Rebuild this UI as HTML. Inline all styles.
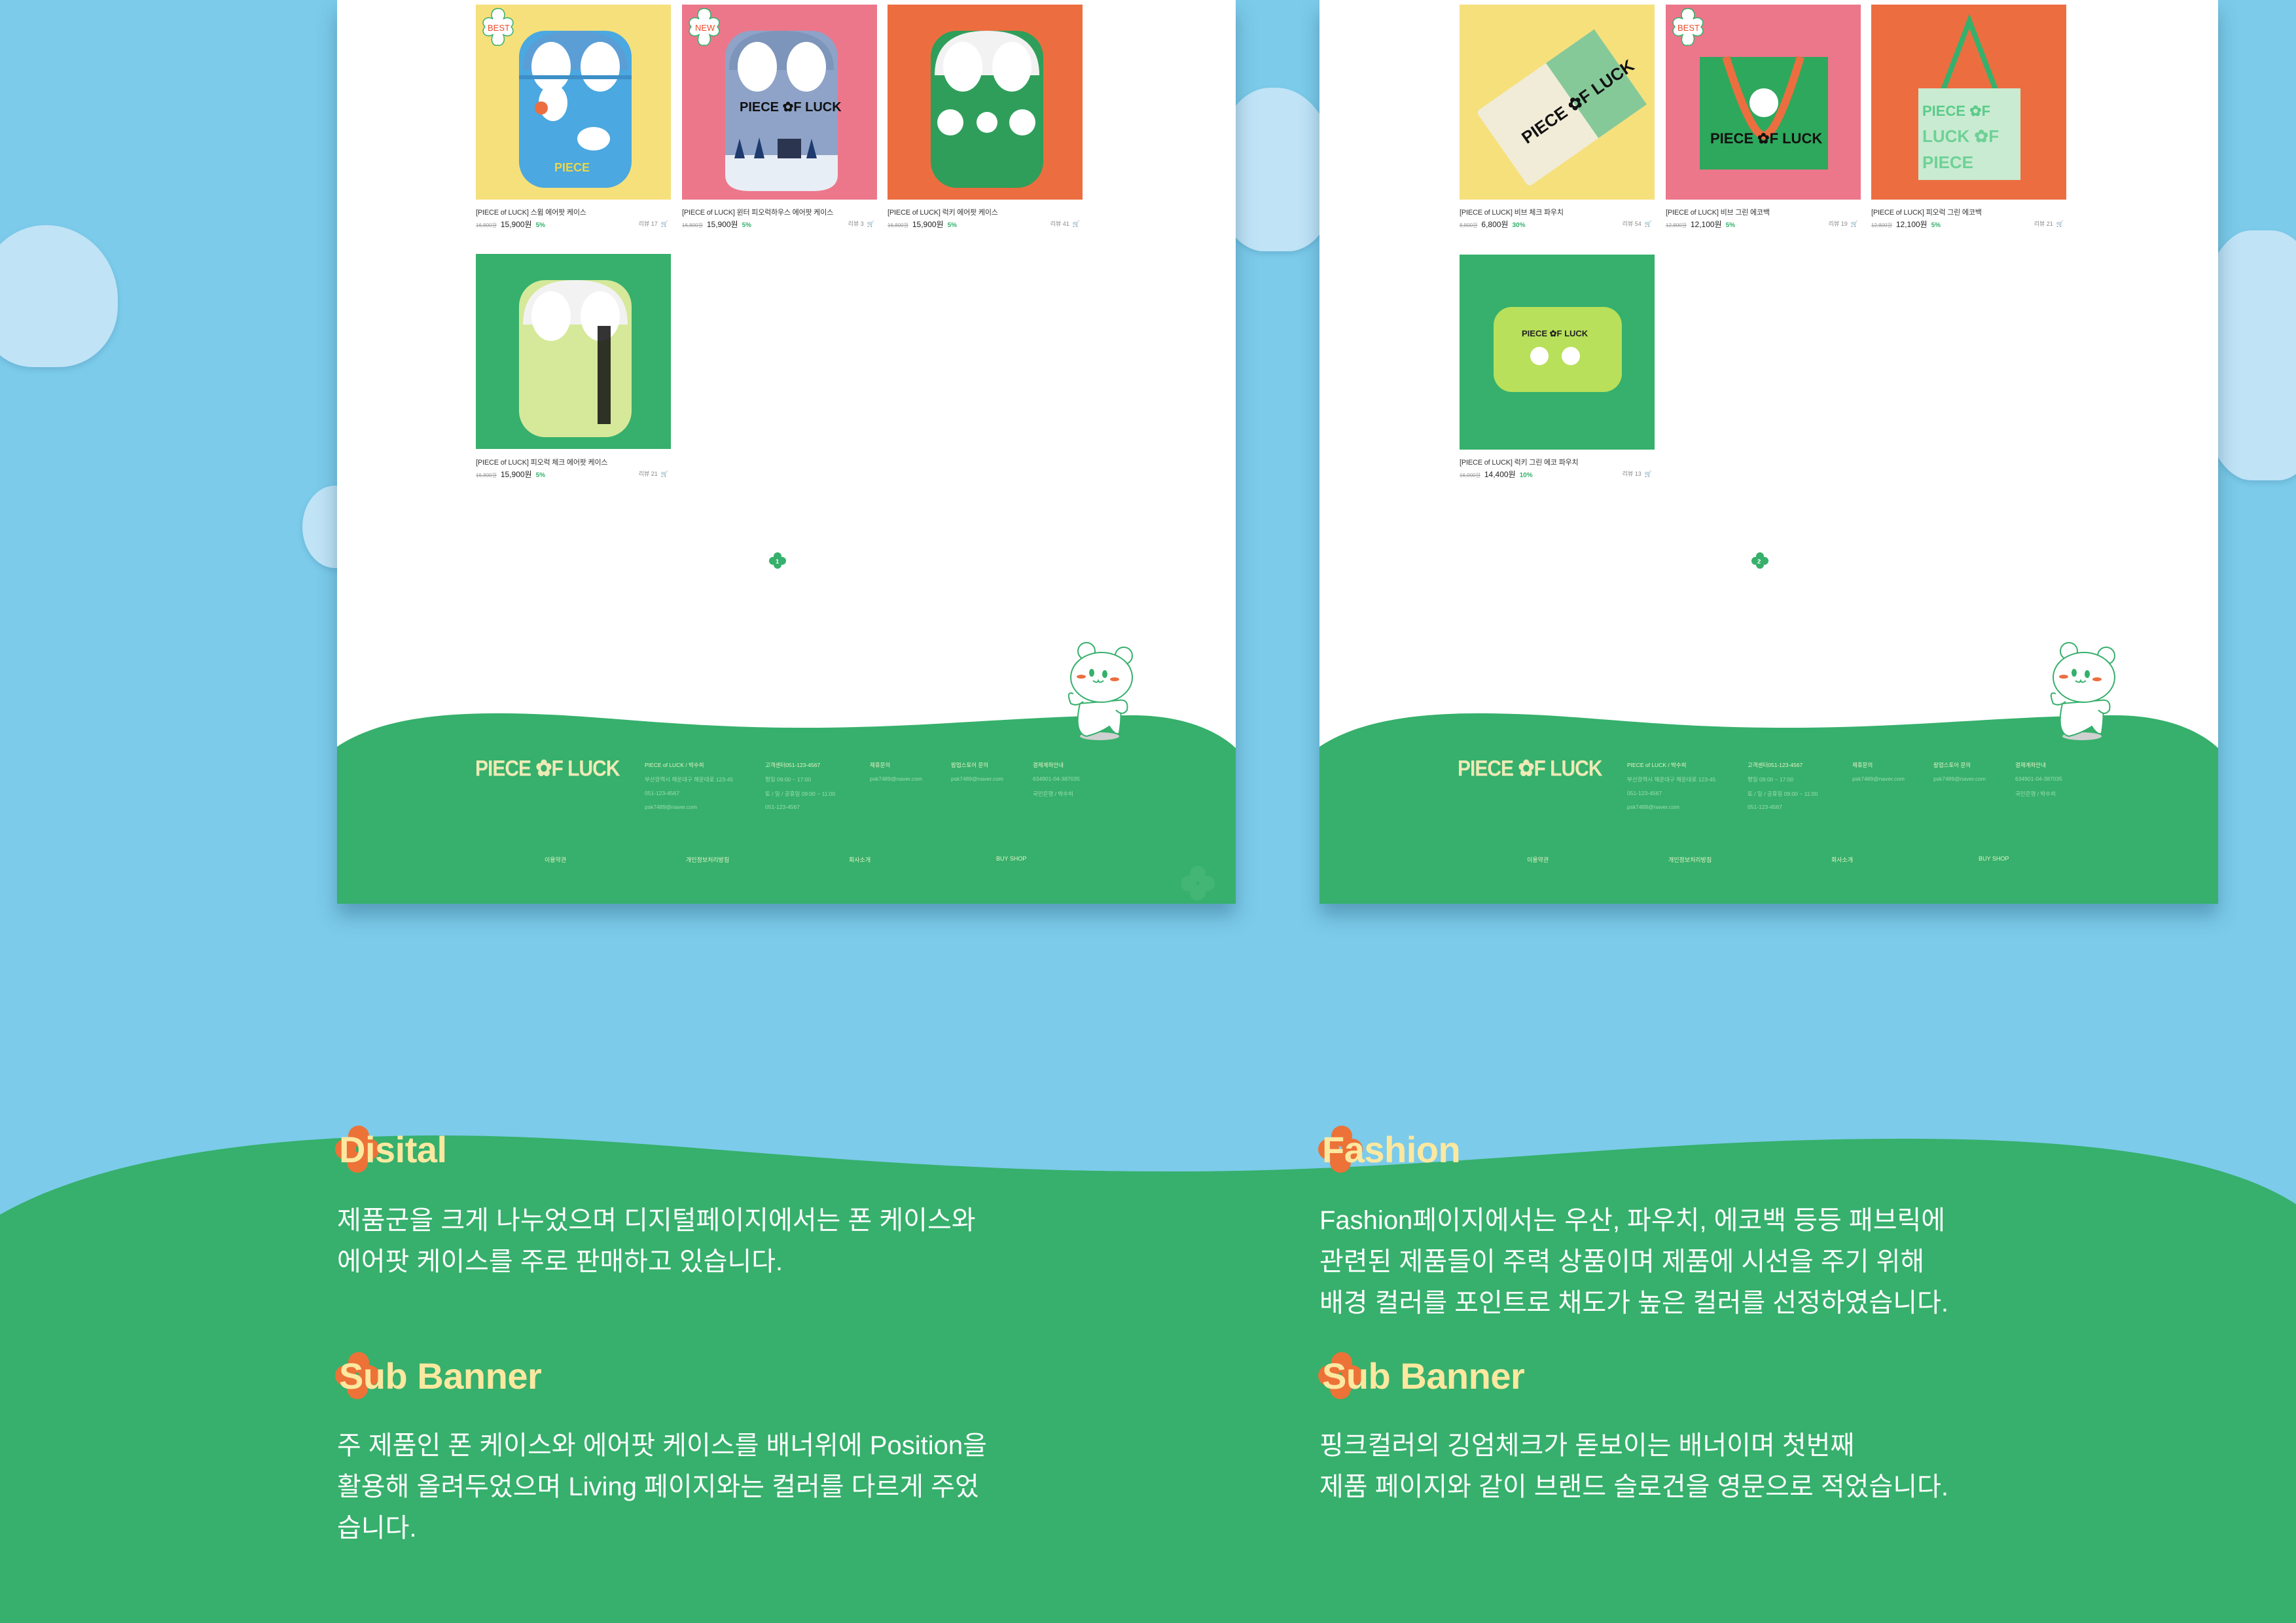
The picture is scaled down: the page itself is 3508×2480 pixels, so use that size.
<!DOCTYPE html>
<html><head><meta charset="utf-8">
<style>
*{margin:0;padding:0;box-sizing:border-box}
body{width:3508px;height:2480px;background:#7ccbea;position:relative;overflow:hidden;font-family:"Liberation Sans","Noto Sans CJK KR",sans-serif}
.abs{position:absolute}
.cloud{position:absolute;background:#c0e3f6;box-shadow:0 4px 8px rgba(60,120,160,.25)}
.page{position:absolute;top:0;width:1373px;height:1381px;background:#fff;box-shadow:0 18px 28px rgba(20,70,100,.35);overflow:hidden}
.tile{position:absolute;width:298px;height:298px;overflow:hidden}
.pt{position:absolute;font-size:11px;color:#333;white-space:nowrap;letter-spacing:-.2px}
.pp{position:absolute;white-space:nowrap;font-size:12px;color:#222;width:298px}
.pp s{font-size:8px;color:#999;margin-right:6px}
.pp b{font-size:10px;color:#36b06c;margin-left:6px}
.pp i{position:absolute;right:4px;top:1px;font-style:normal;font-size:9px;color:#888}
.foot{position:absolute;font-size:8.5px;color:#9fdcb2;white-space:nowrap}
.fh{color:#e7f2c8}
.logo{position:absolute;font-family:"Liberation Sans",sans-serif;font-weight:900;color:#eeeab6;font-size:30px;letter-spacing:-1px;white-space:nowrap;transform:scaleY(1.15)}
.flink{position:absolute;font-size:9px;color:#e7f2c8;white-space:nowrap}
.ttl{position:absolute;font-size:56px;font-weight:bold;color:#fde8a0;white-space:nowrap;letter-spacing:-.5px}
.body{position:absolute;font-size:40px;color:#fff;line-height:63px;white-space:nowrap;letter-spacing:0}
.badge{position:absolute;left:2px;top:2px;width:64px;height:64px}
</style></head><body>

<div class="cloud" style="left:-30px;top:344px;width:210px;height:217px;border-radius:50% 55% 45% 40%"></div>
<div class="cloud" style="left:462px;top:742px;width:100px;height:126px;border-radius:50%"></div>
<div class="cloud" style="left:1860px;top:134px;width:180px;height:250px;border-radius:45% 50% 40% 40%"></div>
<div class="cloud" style="left:3360px;top:352px;width:200px;height:382px;border-radius:40% 45% 40% 40%"></div>

<svg class="abs" style="left:0;top:0" width="3508" height="2480">
<path d="M0,1856 C150,1770 400,1735 671,1735 C1000,1735 1300,1790 1790,1790 C2200,1790 2500,1740 2908,1740 C3200,1740 3400,1770 3508,1840 L3508,2480 L0,2480 Z" fill="#36b06c"/>
</svg>

<!-- LEFT PAGE -->
<div class="page" style="left:515px">
  <div class="tile" style="left:212px;top:7px;background:#f6e07c">
    <svg width="298" height="298"><rect x="66" y="40" width="172" height="240" rx="40" fill="#4ba8e0"/><path d="M72,100 Q72,40 152,40 Q232,40 232,100 Z" fill="#5b9ed6"/><ellipse cx="115" cy="95" rx="30" ry="38" fill="#fff"/><ellipse cx="190" cy="95" rx="30" ry="38" fill="#fff"/><rect x="66" y="108" width="172" height="6" fill="#3d8fc8"/><ellipse cx="118" cy="150" rx="22" ry="28" fill="#fff"/><ellipse cx="180" cy="205" rx="25" ry="18" fill="#fff"/><circle cx="100" cy="158" r="10" fill="#ec6e40"/><text x="120" y="255" font-size="18" font-weight="900" fill="#e6d750" font-family="Liberation Sans">PIECE</text></svg>
    <svg class="badge" viewBox="0 0 64 64"><path d="M32,4 C42,4 44,14 40,20 C50,14 60,24 52,32 C60,40 50,50 40,44 C44,54 38,62 32,60 C24,62 20,54 24,44 C14,50 4,40 12,32 C4,24 14,14 24,20 C20,14 22,4 32,4Z" fill="#fff" stroke="#36b06c" stroke-width="1.5"/><text x="16" y="38" font-size="13" fill="#ea4a2a" font-family="Liberation Sans">BEST</text></svg>
  </div>
  <div class="tile" style="left:527px;top:7px;background:#ec778b">
    <svg width="298" height="298"><rect x="66" y="40" width="172" height="245" rx="40" fill="#8ea3c7"/><path d="M72,100 Q72,40 152,40 Q232,40 232,100 Z" fill="#7d95ba"/><ellipse cx="115" cy="95" rx="30" ry="38" fill="#fff"/><ellipse cx="190" cy="95" rx="30" ry="38" fill="#fff"/><text x="88" y="163" font-size="20" font-weight="900" fill="#111" font-family="Liberation Sans">PIECE ✿F LUCK</text><path d="M66,230 L238,230 L238,260 Q238,285 200,285 L104,285 Q66,285 66,260Z" fill="#e8eef6"/><path d="M80,235 l8,-30 l8,30 M110,235 l8,-32 l8,32 M190,235 l8,-30 l8,30" fill="#1e3a6e"/><rect x="146" y="205" width="36" height="30" fill="#2c3550"/></svg>
    <svg class="badge" viewBox="0 0 64 64"><path d="M32,4 C42,4 44,14 40,20 C50,14 60,24 52,32 C60,40 50,50 40,44 C44,54 38,62 32,60 C24,62 20,54 24,44 C14,50 4,40 12,32 C4,24 14,14 24,20 C20,14 22,4 32,4Z" fill="#fff" stroke="#36b06c" stroke-width="1.5"/><text x="18" y="38" font-size="13" fill="#ea4a2a" font-family="Liberation Sans">NEW</text></svg>
  </div>
  <div class="tile" style="left:841px;top:7px;background:#ec6e40">
    <svg width="298" height="298"><rect x="66" y="40" width="172" height="240" rx="40" fill="#2f9e5a"/><path d="M72,108 Q72,40 152,40 Q232,40 232,108 Z" fill="#f2f2f2"/><ellipse cx="115" cy="95" rx="30" ry="38" fill="#fff"/><ellipse cx="190" cy="95" rx="30" ry="38" fill="#fff"/><circle cx="96" cy="180" r="20" fill="#fff"/><circle cx="152" cy="180" r="16" fill="#fff"/><circle cx="206" cy="180" r="20" fill="#fff"/></svg>
  </div>
  <div class="tile" style="left:212px;top:388px;background:#36b06c">
    <svg width="298" height="298"><rect x="66" y="40" width="172" height="240" rx="40" fill="#d6e89a"/><path d="M72,108 Q72,40 152,40 Q232,40 232,108 Z" fill="#f2f2f2"/><ellipse cx="115" cy="95" rx="30" ry="38" fill="#fff"/><ellipse cx="190" cy="95" rx="30" ry="38" fill="#fff"/><rect x="186" y="110" width="20" height="150" fill="#111" opacity=".85"/></svg>
  </div>

  <div class="pt" style="left:212px;top:316px">[PIECE of LUCK] 스윔 에어팟 케이스</div>
  <div class="pp" style="left:212px;top:334px"><s>16,800원</s>15,900원<b>5%</b><i>리뷰 17 &nbsp;🛒</i></div>
  <div class="pt" style="left:527px;top:316px">[PIECE of LUCK] 윈터 피오럭하우스 에어팟 케이스</div>
  <div class="pp" style="left:527px;top:334px"><s>16,800원</s>15,900원<b>5%</b><i>리뷰 3 &nbsp;🛒</i></div>
  <div class="pt" style="left:841px;top:316px">[PIECE of LUCK] 럭키 에어팟 케이스</div>
  <div class="pp" style="left:841px;top:334px"><s>16,800원</s>15,900원<b>5%</b><i>리뷰 41 &nbsp;🛒</i></div>
  <div class="pt" style="left:212px;top:698px">[PIECE of LUCK] 피오럭 체크 에어팟 케이스</div>
  <div class="pp" style="left:212px;top:716px"><s>16,800원</s>15,900원<b>5%</b><i>리뷰 21 &nbsp;🛒</i></div>

  <svg class="abs" style="left:658px;top:842px" width="30" height="30" viewBox="0 0 30 30"><circle cx="15" cy="8" r="6" fill="#36b06c"/><circle cx="8" cy="15" r="6" fill="#36b06c"/><circle cx="22" cy="15" r="6" fill="#36b06c"/><circle cx="15" cy="21" r="6" fill="#36b06c"/><text x="12" y="19" font-size="9" fill="#fff" font-weight="bold">1</text></svg>

  <svg class="abs" style="left:0;top:1081px" width="1373" height="300"><path d="M0,60 C60,20 150,8 253,9 C400,10 500,30 700,31 C900,32 1050,12 1215,12 C1300,12 1350,40 1373,62 L1373,300 L0,300 Z" fill="#36b06c"/></svg>
  <svg class="abs" style="left:1085px;top:960px" width="160" height="180" viewBox="0 0 160 180"><ellipse cx="80" cy="165" rx="30" ry="6" fill="#d0d0d0"/><g fill="#fff" stroke="#36b06c" stroke-width="2"><path d="M50,115 Q40,160 60,165 Q80,160 95,150 Q105,165 110,160 Q115,130 110,110 Z"/><path d="M40,100 Q28,95 36,115 Q45,120 55,112"/><path d="M110,110 Q125,108 122,125 Q115,135 105,125"/><circle cx="60" cy="35" r="13"/><circle cx="117" cy="42" r="13"/><ellipse cx="83" cy="75" rx="47" ry="38"/></g><ellipse cx="68" cy="68" rx="4" ry="6" fill="#36b06c"/><ellipse cx="88" cy="70" rx="4" ry="6" fill="#36b06c"/><path d="M70,80 Q76,85 78,80 Q80,85 86,80" stroke="#36b06c" stroke-width="2" fill="none"/><ellipse cx="52" cy="74" rx="7" ry="3" fill="#ec6e40"/><ellipse cx="103" cy="78" rx="7" ry="3" fill="#ec6e40"/></svg>

  <div class="logo" style="left:211px;top:1157px">PIECE ✿F LUCK</div>
  <div class="foot fh" style="left:470px;top:1163px">PIECE of LUCK / 박수희</div>
  <div class="foot" style="left:470px;top:1185px">부산광역시 해운대구 해운대로 123-45</div>
  <div class="foot" style="left:470px;top:1207px">051-123-4567</div>
  <div class="foot" style="left:470px;top:1228px">psk7489@naver.com</div>
  <div class="foot fh" style="left:654px;top:1163px">고객센터051-123-4567</div>
  <div class="foot" style="left:654px;top:1185px">평일 09:00 ~ 17:00</div>
  <div class="foot" style="left:654px;top:1207px">토 / 일 / 공휴일 09:00 ~ 11:00</div>
  <div class="foot" style="left:654px;top:1228px">051-123-4567</div>
  <div class="foot fh" style="left:814px;top:1163px">제휴문의</div>
  <div class="foot" style="left:814px;top:1185px">psk7489@naver.com</div>
  <div class="foot fh" style="left:938px;top:1163px">팝업스토어 문의</div>
  <div class="foot" style="left:938px;top:1185px">psk7489@naver.com</div>
  <div class="foot fh" style="left:1063px;top:1163px">결제계좌안내</div>
  <div class="foot" style="left:1063px;top:1185px">634901-04-387035</div>
  <div class="foot" style="left:1063px;top:1207px">국민은행 / 박수희</div>
  <div class="flink" style="left:317px;top:1307px">이용약관</div>
  <div class="flink" style="left:533px;top:1307px">개인정보처리방침</div>
  <div class="flink" style="left:782px;top:1307px">회사소개</div>
  <div class="flink" style="left:1007px;top:1307px">BUY SHOP</div>
  <svg class="abs" style="left:1285px;top:1320px" width="60" height="60"><g fill="#4cbb7c" opacity=".6"><circle cx="30" cy="15" r="12"/><circle cx="16" cy="30" r="12"/><circle cx="44" cy="30" r="12"/><circle cx="30" cy="44" r="12"/></g></svg>
</div>

<!-- RIGHT PAGE -->
<div class="page" style="left:2016px">
  <div class="tile" style="left:214px;top:7px;background:#f6e07c">
    <svg width="298" height="298"><g transform="rotate(-35 150 150)"><rect x="40" y="90" width="220" height="140" rx="6" fill="#f1ecd8"/><rect x="170" y="90" width="90" height="140" fill="#6cc08a" opacity=".8"/><text x="75" y="175" font-size="26" font-weight="900" fill="#111" font-family="Liberation Sans">PIECE ✿F LUCK</text></g></svg>
  </div>
  <div class="tile" style="left:529px;top:7px;background:#ec778b">
    <svg width="298" height="298"><rect x="52" y="80" width="196" height="172" fill="#2ea85c"/><path d="M92,80 Q130,200 150,200 Q170,200 206,80" stroke="#ec6e40" stroke-width="12" fill="none"/><circle cx="150" cy="150" r="22" fill="#fff"/><text x="68" y="212" font-size="22" font-weight="900" fill="#111" font-family="Liberation Sans">PIECE ✿F LUCK</text></svg>
    <svg class="badge" viewBox="0 0 64 64"><path d="M32,4 C42,4 44,14 40,20 C50,14 60,24 52,32 C60,40 50,50 40,44 C44,54 38,62 32,60 C24,62 20,54 24,44 C14,50 4,40 12,32 C4,24 14,14 24,20 C20,14 22,4 32,4Z" fill="#fff" stroke="#36b06c" stroke-width="1.5"/><text x="16" y="38" font-size="13" fill="#ea4a2a" font-family="Liberation Sans">BEST</text></svg>
  </div>
  <div class="tile" style="left:843px;top:7px;background:#ec6e40">
    <svg width="298" height="298"><path d="M110,130 L150,25 L190,130" stroke="#36b06c" stroke-width="8" fill="none"/><rect x="72" y="128" width="156" height="140" fill="#c9ebd2"/><text x="78" y="170" font-size="22" font-weight="900" fill="#5ccb8a" font-family="Liberation Sans">PIECE ✿F</text><text x="78" y="210" font-size="26" font-weight="900" fill="#6fd196" font-family="Liberation Sans">LUCK ✿F</text><text x="78" y="250" font-size="26" font-weight="900" fill="#6fd196" font-family="Liberation Sans">PIECE</text></svg>
  </div>
  <div class="tile" style="left:214px;top:389px;background:#36b06c">
    <svg width="298" height="298"><rect x="52" y="80" width="196" height="130" rx="28" fill="#b8e05a"/><text x="95" y="125" font-size="13" font-weight="900" fill="#222" font-family="Liberation Sans">PIECE ✿F LUCK</text><circle cx="122" cy="155" r="14" fill="#fff"/><circle cx="170" cy="155" r="14" fill="#fff"/></svg>
  </div>

  <div class="pt" style="left:214px;top:316px">[PIECE of LUCK] 비브 체크 파우치</div>
  <div class="pp" style="left:214px;top:334px"><s>8,800원</s>6,800원<b>30%</b><i>리뷰 54 &nbsp;🛒</i></div>
  <div class="pt" style="left:529px;top:316px">[PIECE of LUCK] 비브 그린 에코백</div>
  <div class="pp" style="left:529px;top:334px"><s>12,800원</s>12,100원<b>5%</b><i>리뷰 19 &nbsp;🛒</i></div>
  <div class="pt" style="left:843px;top:316px">[PIECE of LUCK] 피오럭 그린 에코백</div>
  <div class="pp" style="left:843px;top:334px"><s>12,800원</s>12,100원<b>5%</b><i>리뷰 21 &nbsp;🛒</i></div>
  <div class="pt" style="left:214px;top:698px">[PIECE of LUCK] 럭키 그린 에코 파우치</div>
  <div class="pp" style="left:214px;top:716px"><s>16,000원</s>14,400원<b>10%</b><i>리뷰 13 &nbsp;🛒</i></div>

  <svg class="abs" style="left:658px;top:842px" width="30" height="30" viewBox="0 0 30 30"><circle cx="15" cy="8" r="6" fill="#36b06c"/><circle cx="8" cy="15" r="6" fill="#36b06c"/><circle cx="22" cy="15" r="6" fill="#36b06c"/><circle cx="15" cy="21" r="6" fill="#36b06c"/><text x="11" y="19" font-size="9" fill="#fff" font-weight="bold">2</text></svg>

  <svg class="abs" style="left:0;top:1081px" width="1373" height="300"><path d="M0,60 C60,20 150,8 253,9 C400,10 500,30 700,31 C900,32 1050,12 1215,12 C1300,12 1350,40 1373,62 L1373,300 L0,300 Z" fill="#36b06c"/></svg>
  <svg class="abs" style="left:1085px;top:960px" width="160" height="180" viewBox="0 0 160 180"><ellipse cx="80" cy="165" rx="30" ry="6" fill="#d0d0d0"/><g fill="#fff" stroke="#36b06c" stroke-width="2"><path d="M50,115 Q40,160 60,165 Q80,160 95,150 Q105,165 110,160 Q115,130 110,110 Z"/><path d="M40,100 Q28,95 36,115 Q45,120 55,112"/><path d="M110,110 Q125,108 122,125 Q115,135 105,125"/><circle cx="60" cy="35" r="13"/><circle cx="117" cy="42" r="13"/><ellipse cx="83" cy="75" rx="47" ry="38"/></g><ellipse cx="68" cy="68" rx="4" ry="6" fill="#36b06c"/><ellipse cx="88" cy="70" rx="4" ry="6" fill="#36b06c"/><path d="M70,80 Q76,85 78,80 Q80,85 86,80" stroke="#36b06c" stroke-width="2" fill="none"/><ellipse cx="52" cy="74" rx="7" ry="3" fill="#ec6e40"/><ellipse cx="103" cy="78" rx="7" ry="3" fill="#ec6e40"/></svg>

  <div class="logo" style="left:211px;top:1157px">PIECE ✿F LUCK</div>
  <div class="foot fh" style="left:470px;top:1163px">PIECE of LUCK / 박수희</div>
  <div class="foot" style="left:470px;top:1185px">부산광역시 해운대구 해운대로 123-45</div>
  <div class="foot" style="left:470px;top:1207px">051-123-4567</div>
  <div class="foot" style="left:470px;top:1228px">psk7489@naver.com</div>
  <div class="foot fh" style="left:654px;top:1163px">고객센터051-123-4567</div>
  <div class="foot" style="left:654px;top:1185px">평일 09:00 ~ 17:00</div>
  <div class="foot" style="left:654px;top:1207px">토 / 일 / 공휴일 09:00 ~ 11:00</div>
  <div class="foot" style="left:654px;top:1228px">051-123-4567</div>
  <div class="foot fh" style="left:814px;top:1163px">제휴문의</div>
  <div class="foot" style="left:814px;top:1185px">psk7489@naver.com</div>
  <div class="foot fh" style="left:938px;top:1163px">팝업스토어 문의</div>
  <div class="foot" style="left:938px;top:1185px">psk7489@naver.com</div>
  <div class="foot fh" style="left:1063px;top:1163px">결제계좌안내</div>
  <div class="foot" style="left:1063px;top:1185px">634901-04-387035</div>
  <div class="foot" style="left:1063px;top:1207px">국민은행 / 박수희</div>
  <div class="flink" style="left:317px;top:1307px">이용약관</div>
  <div class="flink" style="left:533px;top:1307px">개인정보처리방침</div>
  <div class="flink" style="left:782px;top:1307px">회사소개</div>
  <div class="flink" style="left:1007px;top:1307px">BUY SHOP</div>
</div>

<svg class="abs" style="left:508px;top:1718px" width="80" height="80" viewBox="0 0 80 80"><g fill="#ec7238"><circle cx="40" cy="18" r="16"/><circle cx="20" cy="38" r="16"/><circle cx="56" cy="38" r="16"/><circle cx="38" cy="58" r="16"/></g></svg>
<div class="ttl" style="left:518px;top:1724px">Disital</div>
<div class="body" style="left:515px;top:1834px">제품군을 크게 나누었으며 디지털페이지에서는 폰 케이스와<br>에어팟 케이스를 주로 판매하고 있습니다.</div>

<svg class="abs" style="left:508px;top:2064px" width="80" height="80" viewBox="0 0 80 80"><g fill="#ec7238"><circle cx="40" cy="18" r="16"/><circle cx="20" cy="38" r="16"/><circle cx="56" cy="38" r="16"/><circle cx="38" cy="58" r="16"/></g></svg>
<div class="ttl" style="left:518px;top:2070px">Sub Banner</div>
<div class="body" style="left:515px;top:2178px">주 제품인 폰 케이스와 에어팟 케이스를 배너위에 Position을<br>활용해 올려두었으며 Living 페이지와는 컬러를 다르게 주었<br>습니다.</div>

<svg class="abs" style="left:2010px;top:1718px" width="80" height="80" viewBox="0 0 80 80"><g fill="#ec7238"><circle cx="40" cy="18" r="16"/><circle cx="20" cy="38" r="16"/><circle cx="56" cy="38" r="16"/><circle cx="38" cy="58" r="16"/></g></svg>
<div class="ttl" style="left:2020px;top:1724px">Fashion</div>
<div class="body" style="left:2016px;top:1834px">Fashion페이지에서는 우산, 파우치, 에코백 등등 패브릭에<br>관련된 제품들이 주력 상품이며 제품에 시선을 주기 위해<br>배경 컬러를 포인트로 채도가 높은 컬러를 선정하였습니다.</div>

<svg class="abs" style="left:2010px;top:2064px" width="80" height="80" viewBox="0 0 80 80"><g fill="#ec7238"><circle cx="40" cy="18" r="16"/><circle cx="20" cy="38" r="16"/><circle cx="56" cy="38" r="16"/><circle cx="38" cy="58" r="16"/></g></svg>
<div class="ttl" style="left:2020px;top:2070px">Sub Banner</div>
<div class="body" style="left:2016px;top:2178px">핑크컬러의 깅엄체크가 돋보이는 배너이며 첫번째<br>제품 페이지와 같이 브랜드 슬로건을 영문으로 적었습니다.</div>

</body></html>
